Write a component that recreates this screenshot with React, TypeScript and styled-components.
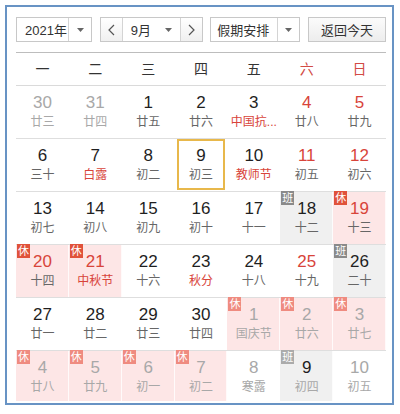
import React from "react";
import styled, { createGlobalStyle } from "styled-components";

type Mark = "rest" | "work";
type Tone = "dark" | "red" | "gray" | "muted";

interface Day {
  d: number;
  l: string;
  other?: boolean;
  weekend?: boolean;
  fest?: boolean;
  mark?: Mark;
  today?: boolean;
  numTone?: Tone;
}

const GlobalStyle = createGlobalStyle`
  html, body {
    margin: 0;
    padding: 0;
    background: #fff;
  }
  body {
    font-family: "Liberation Sans", "Noto Sans CJK SC", sans-serif;
  }
`;

const Page = styled.div`
  padding: 5px 0 0 5px;
`;

const Frame = styled.div`
  box-sizing: border-box;
  width: 389px;
  border: 2px solid #6893c4;
  padding: 10px 6px 2px 9px;
  background: #fff;
`;

const Toolbar = styled.div`
  display: flex;
  justify-content: space-between;
  height: 25px;
  margin-bottom: 10px;
`;

const Control = styled.div<{ $w: number }>`
  box-sizing: border-box;
  width: ${(p) => p.$w}px;
  height: 25px;
  border: 1px solid #c8c8c8;
  display: flex;
  background: #fff;
  font-size: 13px;
  color: #333;
`;

const Label = styled.span<{ $pad: number }>`
  flex: 1;
  display: flex;
  align-items: center;
  padding-left: ${(p) => p.$pad}px;
  white-space: nowrap;
  overflow: hidden;
`;

const Seg = styled.span<{ $w: number; $left?: boolean; $right?: boolean; $shade?: boolean }>`
  flex: none;
  width: ${(p) => p.$w}px;
  display: flex;
  align-items: center;
  justify-content: center;
  border-left: ${(p) => (p.$left ? "1px solid #d4d4d4" : "none")};
  border-right: ${(p) => (p.$right ? "1px solid #d4d4d4" : "none")};
  background: ${(p) => (p.$shade ? "linear-gradient(#ffffff, #f0f0f0)" : "transparent")};
`;

const TodayButton = styled.button`
  box-sizing: border-box;
  width: 78px;
  height: 25px;
  border: 1px solid #c8c8c8;
  background: linear-gradient(#fbfbfb, #ededed);
  font-family: inherit;
  font-size: 13px;
  color: #333;
  padding: 0;
  cursor: pointer;
`;

const WeekHead = styled.div`
  display: grid;
  grid-template-columns: repeat(7, 1fr);
  box-sizing: border-box;
  height: 34px;
  border-top: 1px solid #bdbdbd;
  border-bottom: 1px solid #dadada;
  padding-bottom: 3px;
`;

const HeadCell = styled.div<{ $weekend?: boolean }>`
  display: flex;
  align-items: center;
  justify-content: center;
  font-size: 14px;
  color: ${(p) => (p.$weekend ? "#d24b45" : "#333")};
`;

const Week = styled.div`
  display: grid;
  grid-template-columns: repeat(7, 1fr);
  box-sizing: border-box;
  height: 53px;
  border-bottom: 1px solid #dedede;

  &:last-child {
    height: 50px;
    border-bottom: none;
  }
`;

const cellBg = { rest: "#fde6e6", work: "#f0f0f0" };

const Cell = styled.div<{ $mark?: Mark }>`
  position: relative;
  display: flex;
  flex-direction: column;
  align-items: center;
  padding-top: 7px;
  background: ${(p) => (p.$mark ? cellBg[p.$mark] : "transparent")};
  box-shadow: ${(p) => (p.$mark ? "inset -1px 0 0 rgba(255,255,255,0.8)" : "none")};
`;

const toneColor: Record<Tone, string> = {
  dark: "#1f1f1f",
  red: "#d8443a",
  gray: "#a8a8a8",
  muted: "#666",
};

const Num = styled.span<{ $tone: Tone }>`
  font-size: 17px;
  line-height: 20px;
  color: ${(p) => toneColor[p.$tone]};
`;

const Lunar = styled.span<{ $tone: Tone }>`
  font-size: 12px;
  line-height: 18px;
  white-space: nowrap;
  color: ${(p) => toneColor[p.$tone]};
`;

const Badge = styled.span<{ $mark: Mark; $other?: boolean }>`
  position: absolute;
  top: -1px;
  left: 1px;
  width: 13px;
  height: 14px;
  font-size: 11px;
  line-height: 14px;
  text-align: center;
  color: #fff;
  background: ${(p) =>
    p.$mark === "rest" ? (p.$other ? "#ef8b80" : "#e0523b") : p.$other ? "#ababab" : "#8a8a8a"};
`;

const TodayRing = styled.span`
  position: absolute;
  top: 0;
  bottom: 1px;
  left: 2px;
  right: 2px;
  border: 2px solid #e8b84b;
  pointer-events: none;
`;

const Caret = () => (
  <svg width="7" height="4" viewBox="0 0 7 4">
    <polygon points="0,0 7,0 3.5,4" fill="#666" />
  </svg>
);

const Chevron = ({ dir }: { dir: "left" | "right" }) => (
  <svg width="7" height="12" viewBox="0 0 7 12">
    <path
      d={dir === "left" ? "M6 1 L1 6 L6 11" : "M1 1 L6 6 L1 11"}
      fill="none"
      stroke="#555"
      strokeWidth="1.2"
    />
  </svg>
);

const weekdays = ["一", "二", "三", "四", "五", "六", "日"];

const weeks: Day[][] = [
  [
    { d: 30, l: "廿三", other: true },
    { d: 31, l: "廿四", other: true },
    { d: 1, l: "廿五" },
    { d: 2, l: "廿六" },
    { d: 3, l: "中国抗...", fest: true },
    { d: 4, l: "廿八", weekend: true },
    { d: 5, l: "廿九", weekend: true },
  ],
  [
    { d: 6, l: "三十" },
    { d: 7, l: "白露", fest: true },
    { d: 8, l: "初二" },
    { d: 9, l: "初三", today: true },
    { d: 10, l: "教师节", fest: true },
    { d: 11, l: "初五", weekend: true },
    { d: 12, l: "初六", weekend: true },
  ],
  [
    { d: 13, l: "初七" },
    { d: 14, l: "初八" },
    { d: 15, l: "初九" },
    { d: 16, l: "初十" },
    { d: 17, l: "十一" },
    { d: 18, l: "十二", mark: "work" },
    { d: 19, l: "十三", mark: "rest" },
  ],
  [
    { d: 20, l: "十四", mark: "rest" },
    { d: 21, l: "中秋节", mark: "rest", fest: true },
    { d: 22, l: "十六" },
    { d: 23, l: "秋分", fest: true },
    { d: 24, l: "十八" },
    { d: 25, l: "十九", weekend: true },
    { d: 26, l: "二十", mark: "work" },
  ],
  [
    { d: 27, l: "廿一" },
    { d: 28, l: "廿二" },
    { d: 29, l: "廿三" },
    { d: 30, l: "廿四" },
    { d: 1, l: "国庆节", other: true, mark: "rest" },
    { d: 2, l: "廿六", other: true, mark: "rest" },
    { d: 3, l: "廿七", other: true, mark: "rest" },
  ],
  [
    { d: 4, l: "廿八", other: true, mark: "rest" },
    { d: 5, l: "廿九", other: true, mark: "rest" },
    { d: 6, l: "初一", other: true, mark: "rest" },
    { d: 7, l: "初二", other: true, mark: "rest" },
    { d: 8, l: "寒露", other: true },
    { d: 9, l: "初四", other: true, mark: "work", numTone: "dark" },
    { d: 10, l: "初五", other: true },
  ],
];

const numToneOf = (day: Day): Tone => {
  if (day.numTone) return day.numTone;
  if (day.other) return "gray";
  if (day.mark === "work") return "dark";
  if (day.weekend || day.mark === "rest") return "red";
  return "dark";
};

const lunarToneOf = (day: Day): Tone => {
  if (day.other) return "gray";
  if (day.fest) return "red";
  return "muted";
};

export default function App() {
  return (
    <Page>
      <GlobalStyle />
      <Frame>
        <Toolbar>
          <Control $w={76}>
            <Label $pad={8}>2021年</Label>
            <Seg $w={22} $left>
              <Caret />
            </Seg>
          </Control>
          <Control $w={103}>
            <Seg $w={21} $right $shade>
              <Chevron dir="left" />
            </Seg>
            <Label $pad={8}>9月</Label>
            <Seg $w={22}>
              <Caret />
            </Seg>
            <Seg $w={21} $left $shade>
              <Chevron dir="right" />
            </Seg>
          </Control>
          <Control $w={90}>
            <Label $pad={6}>假期安排</Label>
            <Seg $w={21} $left>
              <Caret />
            </Seg>
          </Control>
          <TodayButton>返回今天</TodayButton>
        </Toolbar>

        <WeekHead>
          {weekdays.map((w, i) => (
            <HeadCell key={w} $weekend={i >= 5}>
              {w}
            </HeadCell>
          ))}
        </WeekHead>

        {weeks.map((week, wi) => (
          <Week key={wi}>
            {week.map((day, di) => (
              <Cell key={di} $mark={day.mark}>
                {day.mark && (
                  <Badge $mark={day.mark} $other={day.other}>
                    {day.mark === "rest" ? "休" : "班"}
                  </Badge>
                )}
                <Num $tone={numToneOf(day)}>{day.d}</Num>
                <Lunar $tone={lunarToneOf(day)}>{day.l}</Lunar>
                {day.today && <TodayRing />}
              </Cell>
            ))}
          </Week>
        ))}
      </Frame>
    </Page>
  );
}
